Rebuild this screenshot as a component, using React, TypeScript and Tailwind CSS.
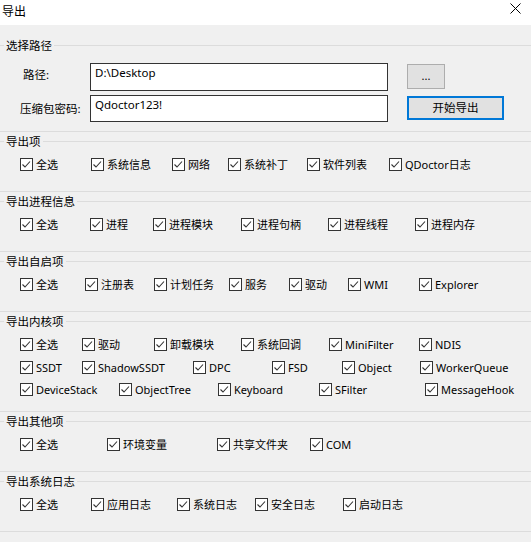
import React from "react";

type Item = { label: string; w: string };

const FONT = {
  fontFamily: '"Noto Sans", "Noto Sans CJK SC", sans-serif',
} as const;

function Check() {
  return (
    <span className="flex h-[13px] w-[13px] shrink-0 items-center justify-center border border-[#333333] bg-white">
      <svg width="11" height="11" viewBox="0 0 11 11" fill="none">
        <path d="M1.5 5.5 L4 8 L9 2.5" stroke="#333333" strokeWidth="1.1" />
      </svg>
    </span>
  );
}

function CheckItem({ item }: { item: Item }) {
  return (
    <div className={`flex h-[13px] shrink-0 items-center ${item.w}`}>
      <Check />
      <span className="ml-[3px] whitespace-nowrap text-[11px] leading-none text-black">{item.label}</span>
    </div>
  );
}

function Header({ title }: { title: string }) {
  return (
    <div className="flex h-[13px] items-center">
      <div className="h-px w-[4px] bg-[#dcdcdc]" />
      <span className="px-[2px] text-[11.5px] leading-none text-black">{title}</span>
      <div className="h-px flex-1 bg-[#dcdcdc]" />
    </div>
  );
}

function Line({ className }: { className: string }) {
  return <div className={`h-px w-full bg-[#dcdcdc] ${className}`} />;
}

function Row({ items, className = "" }: { items: Item[]; className?: string }) {
  return (
    <div className={`flex pl-[20px] ${className}`}>
      {items.map((it) => (
        <CheckItem key={it.label} item={it} />
      ))}
    </div>
  );
}

const exportItems: Item[] = [
  { label: "全选", w: "w-[71px]" },
  { label: "系统信息", w: "w-[81px]" },
  { label: "网络", w: "w-[56px]" },
  { label: "系统补丁", w: "w-[79px]" },
  { label: "软件列表", w: "w-[82px]" },
  { label: "QDoctor日志", w: "w-[100px]" },
];

const processItems: Item[] = [
  { label: "全选", w: "w-[70px]" },
  { label: "进程", w: "w-[63px]" },
  { label: "进程模块", w: "w-[88px]" },
  { label: "进程句柄", w: "w-[87px]" },
  { label: "进程线程", w: "w-[87px]" },
  { label: "进程内存", w: "w-[90px]" },
];

const startupItems: Item[] = [
  { label: "全选", w: "w-[65px]" },
  { label: "注册表", w: "w-[69px]" },
  { label: "计划任务", w: "w-[75px]" },
  { label: "服务", w: "w-[60px]" },
  { label: "驱动", w: "w-[59px]" },
  { label: "WMI", w: "w-[71px]" },
  { label: "Explorer", w: "w-[80px]" },
];

const kernelRow1: Item[] = [
  { label: "全选", w: "w-[62px]" },
  { label: "驱动", w: "w-[72px]" },
  { label: "卸载模块", w: "w-[87px]" },
  { label: "系统回调", w: "w-[88px]" },
  { label: "MiniFilter", w: "w-[90px]" },
  { label: "NDIS", w: "w-[80px]" },
];

const kernelRow2: Item[] = [
  { label: "SSDT", w: "w-[62px]" },
  { label: "ShadowSSDT", w: "w-[111px]" },
  { label: "DPC", w: "w-[79px]" },
  { label: "FSD", w: "w-[70px]" },
  { label: "Object", w: "w-[78px]" },
  { label: "WorkerQueue", w: "w-[100px]" },
];

const kernelRow3: Item[] = [
  { label: "DeviceStack", w: "w-[99px]" },
  { label: "ObjectTree", w: "w-[99px]" },
  { label: "Keyboard", w: "w-[101px]" },
  { label: "SFilter", w: "w-[106px]" },
  { label: "MessageHook", w: "w-[100px]" },
];

const otherItems: Item[] = [
  { label: "全选", w: "w-[87px]" },
  { label: "环境变量", w: "w-[110px]" },
  { label: "共享文件夹", w: "w-[93px]" },
  { label: "COM", w: "w-[80px]" },
];

const logItems: Item[] = [
  { label: "全选", w: "w-[71px]" },
  { label: "应用日志", w: "w-[86px]" },
  { label: "系统日志", w: "w-[78px]" },
  { label: "安全日志", w: "w-[88px]" },
  { label: "启动日志", w: "w-[90px]" },
];

function Group({ title, rows, tail = "mt-[20px]" }: { title: string; rows: Item[][]; tail?: string }) {
  return (
    <div className="flex flex-col">
      <Header title={title} />
      {rows.map((r, i) => (
        <Row key={i} items={r} className={i === 0 ? "mt-[10px]" : i === 1 ? "mt-[10px]" : "mt-[9px]"} />
      ))}
      <Line className={tail} />
    </div>
  );
}

export default function App() {
  return (
    <div className="flex h-[542px] w-[531px] flex-col overflow-hidden bg-[#f0f0f0] text-black" style={FONT}>
      {/* title bar */}
      <div className="flex h-[25px] shrink-0 items-start justify-between bg-white">
        <span className="pl-[2px] pt-[6px] text-[12px] leading-none">导出</span>
        <svg className="mr-[10px] mt-[3px]" width="11" height="11" viewBox="0 0 11 11">
          <path d="M0.5 0.5 L10.5 10.5 M10.5 0.5 L0.5 10.5" stroke="#000" strokeWidth="1" />
        </svg>
      </div>

      <div className="flex flex-col gap-[3px] pt-[14px]">
        {/* path selection */}
        <div className="flex flex-col">
          <Header title="选择路径" />
          <div className="mt-[11px] flex items-start">
            <div className="flex h-[28px] w-[90px] items-center pb-[4px] pl-[23px] text-[11.5px] leading-none">路径:</div>
            <div className="h-[28px] w-[298px] border border-[#333333] bg-white px-[4px] pt-[3px] text-[11.5px] leading-none">
              D:\Desktop
            </div>
            <button className="ml-[19px] mt-[1px] flex h-[25px] w-[38px] items-center justify-center border border-[#adadad] bg-[#e1e1e1] pb-[2px] text-[11px] leading-none">
              ...
            </button>
          </div>
          <div className="mt-[4px] flex items-start">
            <div className="flex h-[27px] w-[90px] items-center pl-[20px] text-[11.5px] leading-none">压缩包密码:</div>
            <div className="h-[27px] w-[298px] border border-[#333333] bg-white px-[4px] pt-[3px] text-[11.5px] leading-none">
              Qdoctor123!
            </div>
            <button className="ml-[19px] mt-[1px] flex h-[24px] w-[97px] items-center justify-center border-2 border-[#0078d7] bg-[#e1e1e1] text-[11.5px] leading-none">
              开始导出
            </button>
          </div>
          <Line className="mt-[9px]" />
        </div>

        <Group title="导出项" rows={[exportItems]} />
        <Group title="导出进程信息" rows={[processItems]} />
        <Group title="导出自启项" rows={[startupItems]} />
        <Group title="导出内核项" rows={[kernelRow1, kernelRow2, kernelRow3]} tail="mt-[15px]" />
        <Group title="导出其他项" rows={[otherItems]} />
        <Group title="导出系统日志" rows={[logItems]} />
      </div>
    </div>
  );
}
